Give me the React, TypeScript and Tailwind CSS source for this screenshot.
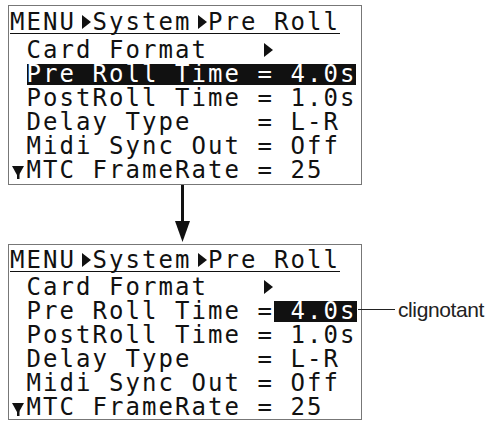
const lcd = "font-['DejaVu_Sans_Mono',monospace] text-[24px] tracking-[2.05px] leading-[24px] text-[#111]";

function RightTri() {
  return (
    <span className="inline-flex w-[16.5px] h-[24px] items-center">
      <svg width="16" height="24" viewBox="0 0 16 24">
        <polygon points="6,5 15,12 6,19" fill="#111" />
      </svg>
    </span>
  );
}

function DownTri() {
  return (
    <span className="inline-flex w-[16.5px] h-[24px] items-center">
      <svg width="16" height="24" viewBox="0 0 16 24">
        <polygon points="2,8 14,8 9,17 7,17" fill="#111" />
        <rect x="7" y="16" width="2.5" height="5" fill="#111" />
      </svg>
    </span>
  );
}

function Row({ children }: { children: React.ReactNode }) {
  return <div className="flex items-center h-[24px] whitespace-pre">{children}</div>;
}

function Screen({ blink }: { blink: boolean }) {
  return (
    <div
      className={`w-[354px] border border-[#777] pl-px ${
        blink ? "h-[176px] pt-[3px]" : "h-[180px] pt-[4px]"
      } ${lcd}`}
    >
      <div className="flex h-[24px] whitespace-pre">
        <div className="flex border-b border-[#111] h-[24px]">
          <span>MENU</span>
          <RightTri />
          <span>System</span>
          <RightTri />
          <span>Pre Roll</span>
        </div>
      </div>
      <div className={blink ? "mt-[3px]" : "mt-[4px]"}>
        <Row>
          <span> Card Format   </span>
          <RightTri />
        </Row>
        {blink ? (
          <Row>
            <span> Pre Roll Time =</span>
            <span className="bg-[#111] text-white h-[21px] flex items-center"> 4.0s</span>
          </Row>
        ) : (
          <Row>
            <span> </span>
            <span className="bg-[#111] text-white h-[21px] flex items-center">Pre Roll Time = 4.0s</span>
          </Row>
        )}
        <Row>
          <span> PostRoll Time = 1.0s</span>
        </Row>
        <Row>
          <span> Delay Type    = L-R</span>
        </Row>
        <Row>
          <span> Midi Sync Out = Off</span>
        </Row>
        <Row>
          <DownTri />
          <span>MTC FrameRate = 25</span>
        </Row>
      </div>
    </div>
  );
}

export default function App() {
  return (
    <main className="w-[487px] h-[421px] bg-white overflow-hidden pt-[5px] pl-[8px]">
      <Screen blink={false} />

      {/* Arrow */}
      <div className="h-[59px] pl-[166px]">
        <svg width="32" height="59" viewBox="0 0 32 59">
          <rect x="7" y="0" width="3" height="40" fill="#111" />
          <polygon points="1,36 16,36 8.5,57" fill="#111" />
        </svg>
      </div>

      <div className="flex items-start">
        <Screen blink={true} />
        <div className="flex items-center mt-[55px] -ml-[4px]">
          <div className="w-[37px] h-px bg-[#222]" />
          <span className="pl-[3px] font-['Liberation_Sans',Arial,sans-serif] text-[21px] leading-none text-[#222] tracking-[-0.4px]">
            clignotant
          </span>
        </div>
      </div>
    </main>
  );
}
